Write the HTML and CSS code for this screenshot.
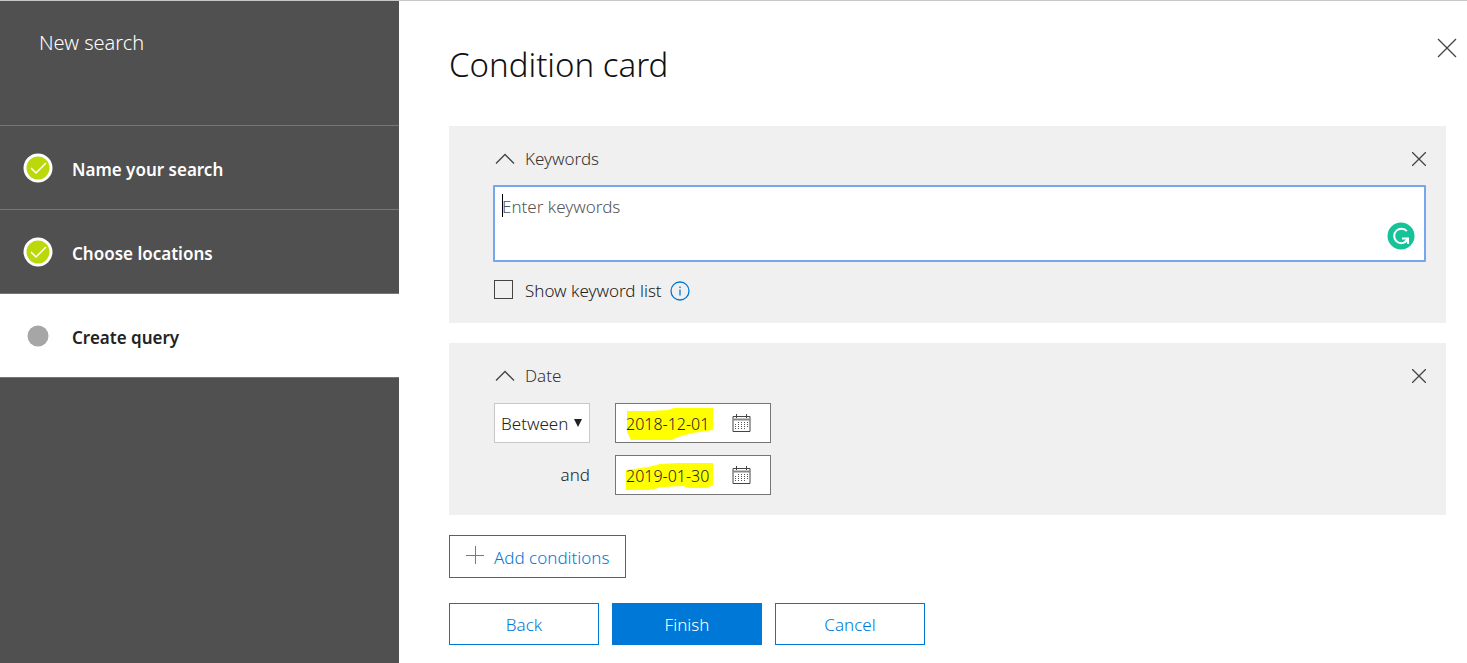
FILE: index.html
```html
<!DOCTYPE html>
<html lang="en">
<head>
  <meta charset="UTF-8" />
  <meta name="viewport" content="width=device-width, initial-scale=1.0"/>
  <title>New search</title>
  <link rel="stylesheet" href="styles.css">
</head>
<body>
  <aside class="sidebar">
    <h2 class="sidebar-title">New search</h2>
    <ol class="steps">
      <li class="step">
        <svg class="step-icon" viewBox="0 0 30 30">
          <circle cx="15" cy="15" r="13" fill="#bad80a" stroke="#fff" stroke-width="3"/>
          <path d="M8 15l5 5 10-10" fill="none" stroke="#fff" stroke-width="1.5"/>
        </svg>
        <span>Name your search</span>
      </li>
      <li class="step">
        <svg class="step-icon" viewBox="0 0 30 30">
          <circle cx="15" cy="15" r="13" fill="#bad80a" stroke="#fff" stroke-width="3"/>
          <path d="M8 15l5 5 10-10" fill="none" stroke="#fff" stroke-width="1.5"/>
        </svg>
        <span>Choose locations</span>
      </li>
      <li class="step active" aria-current="step">
        <svg class="step-icon" viewBox="0 0 30 30">
          <circle cx="15" cy="15" r="10.5" fill="#a6a6a6"/>
        </svg>
        <span>Create query</span>
      </li>
    </ol>
  </aside>

  <main class="main">
    <header class="page-header">
      <h1>Condition card</h1>
      <button class="icon-btn close" type="button" aria-label="Close">
        <svg width="20" height="20" viewBox="0 0 20 20"><path d="M1 1l18 18M19 1L1 19"/></svg>
      </button>
    </header>

    <form class="conditions">
      <section class="card">
        <div class="card-header">
          <button class="icon-btn" type="button" aria-label="Collapse keywords">
            <svg width="20" height="12" viewBox="0 0 20 12"><path d="M1 10.5l9-9 9 9"/></svg>
          </button>
          <label class="card-title" for="keywords">Keywords</label>
          <button class="icon-btn remove" type="button" aria-label="Remove keywords">
            <svg width="14" height="14" viewBox="0 0 14 14"><path d="M0 0l14 14M14 0L0 14"/></svg>
          </button>
        </div>
        <div class="keywords-box">
          <textarea id="keywords" placeholder="Enter keywords"></textarea>
          <svg class="assistant" width="28" height="28" viewBox="0 0 28 28">
            <circle cx="14" cy="14" r="13.5" fill="#15c39a"/>
            <path d="M19.8 9.2A7.2 7.2 0 1 0 19.5 19" fill="none" stroke="#fff" stroke-width="2"/>
            <path d="M15 16.5h6v5.5" fill="none" stroke="#fff" stroke-width="2"/>
            <path d="M21 16.5l-3.5 4" fill="none" stroke="#fff" stroke-width="2"/>
          </svg>
        </div>
        <div class="check-row">
          <input type="checkbox" id="show-list">
          <label for="show-list">Show keyword list</label>
          <svg class="info" width="20" height="20" viewBox="0 0 20 20">
            <circle cx="10" cy="10" r="9" fill="none" stroke="#0078d7" stroke-width="1.3"/>
            <path d="M10 8.5v6M10 5.5v1.5" stroke="#0078d7" stroke-width="1.3"/>
          </svg>
        </div>
      </section>

      <section class="card">
        <div class="card-header">
          <button class="icon-btn" type="button" aria-label="Collapse date">
            <svg width="20" height="12" viewBox="0 0 20 12"><path d="M1 10.5l9-9 9 9"/></svg>
          </button>
          <span class="card-title">Date</span>
          <button class="icon-btn remove" type="button" aria-label="Remove date">
            <svg width="14" height="14" viewBox="0 0 14 14"><path d="M0 0l14 14M14 0L0 14"/></svg>
          </button>
        </div>
        <div class="date-grid">
          <div class="operator">
            <select aria-label="Date operator">
              <option>Between</option>
            </select>
            <svg class="arrow" width="8" height="8" viewBox="0 0 8 8"><path d="M0 0h8L4 8z" fill="#222"/></svg>
          </div>
          <div class="date-field">
            <svg class="marker" width="90" height="36" viewBox="0 0 90 36">
              <path d="M1 7h23l18-1 6-2h39v22l-20 3-12 3-10 4H5l-4-8z" fill="#ff0"/>
            </svg>
            <input type="text" id="date-from" aria-label="Start date" value="2018-12-01">
            <svg class="calendar" width="19" height="18" viewBox="0 0 19 18">
              <path d="M1 2.5h17v15H1z" fill="#fff" stroke="#444"/>
              <path d="M1 5.5h17" stroke="#888" stroke-width="2"/>
              <path d="M4.500 0v4M14.500 0v4" stroke="#444"/>
              <path d="M6 8.500h10M3 10.500h13M3 12.500h13M3 14.500h10" stroke="#555" stroke-dasharray="1 2"/>
            </svg>
          </div>
          <label class="and" for="date-to">and</label>
          <div class="date-field">
            <svg class="marker" width="90" height="36" viewBox="0 0 90 36">
              <path d="M0 14l22-3 12-3 18-1h35v22l-6 3H62l-5-2-20 1-14 3H0z" fill="#ff0"/>
            </svg>
            <input type="text" id="date-to" value="2019-01-30">
            <svg class="calendar" width="19" height="18" viewBox="0 0 19 18">
              <path d="M1 2.5h17v15H1z" fill="#fff" stroke="#444"/>
              <path d="M1 5.5h17" stroke="#888" stroke-width="2"/>
              <path d="M4.500 0v4M14.500 0v4" stroke="#444"/>
              <path d="M6 8.500h10M3 10.500h13M3 12.500h13M3 14.500h10" stroke="#555" stroke-dasharray="1 2"/>
            </svg>
          </div>
        </div>
      </section>

      <button class="btn add" type="button">
        <svg width="18" height="18" viewBox="0 0 18 18"><path d="M0 9.500h18M9.500 0v18"/></svg>
        <span>Add conditions</span>
      </button>

      <div class="actions">
        <button class="btn" type="button">Back</button>
        <button class="btn primary" type="button">Finish</button>
        <button class="btn" type="button">Cancel</button>
      </div>
    </form>
  </main>
</body>
</html>
```
FILE: styles.css
```css
* {
  box-sizing: border-box;
}
body {
  display: flex;
  min-height: 100vh;
  margin: 0;
  border-top: 1px solid #c8c8c8;
  font-family: 'Segoe UI', 'Noto Sans', sans-serif;
  font-size: 17px;
  font-weight: 300;
  line-height: 24px;
  color: #222;
  background: #fff;
}
button, input, select, textarea {
  font: inherit;
  color: inherit;
}
h1, h2 {
  margin: 0;
  font-weight: 300;
}

/* Sidebar */
.sidebar {
  flex: 0 0 399px;
  background: #505050;
  color: #fff;
}
.sidebar-title {
  height: 125px;
  padding: 28px 39px;
  font-size: 20px;
  line-height: 28px;
  border-bottom: 1px solid #767676;
}
.steps {
  list-style: none;
  margin: 0;
  padding: 0;
}
.step {
  display: flex;
  align-items: center;
  gap: 19px;
  height: 84px;
  padding: 4px 23px 0;
  font-weight: 600;
  border-bottom: 1px solid #767676;
}
.step-icon {
  width: 30px;
  height: 30px;
  margin-bottom: 4px;
}
.step.active {
  background: #fff;
  color: #222;
}

/* Main */
.main {
  flex: 1;
  min-width: 0;
  padding: 0 21px 18px 50px;
}
.page-header {
  display: flex;
  justify-content: space-between;
  height: 125px;
  padding-top: 37px;
}
h1 {
  font-size: 33px;
  line-height: 54px;
  color: #111;
}
.icon-btn {
  display: flex;
  padding: 0;
  border: 0;
  background: none;
  cursor: pointer;
}
.icon-btn path {
  fill: none;
  stroke: #444;
  stroke-width: 1.3;
}
.close {
  align-self: flex-start;
  margin-right: -11px;
}
.card {
  padding: 15px 20px 20px 44px;
  margin-bottom: 20px;
  background: #f0f0f0;
}
.card-header {
  display: flex;
  align-items: center;
  gap: 10px;
  height: 36px;
  margin-bottom: 8px;
  padding-left: 2px;
}
.card-title {
  color: #333;
}
.remove {
  margin-left: auto;
}
.keywords-box {
  position: relative;
}
/* text cursor at the start of the box */
.keywords-box::before {
  content: "";
  position: absolute;
  top: 9px;
  left: 9px;
  width: 1px;
  height: 23px;
  background: #000;
}
textarea {
  display: block;
  width: 100%;
  height: 77px;
  padding: 8px 7px;
  border: 2px solid #76a7ee;
  border-radius: 1px;
  outline: none;
  background: #fff;
  resize: none;
}
textarea::placeholder {
  color: #555;
  opacity: 1;
}
.assistant {
  position: absolute;
  right: 11px;
  bottom: 12px;
}
.check-row {
  display: flex;
  align-items: center;
  gap: 8px;
  height: 24px;
  margin-top: 17px;
}
.check-row input {
  appearance: none;
  width: 19px;
  height: 19px;
  margin: 0 4px 4px 1px;
  border: 1px solid #444;
}

/* Date condition */
.date-grid {
  display: grid;
  grid-template-columns: 96px 156px;
  gap: 12px 25px;
  padding: 1px 0 0 1px;
}
.operator, .date-field {
  position: relative;
  height: 40px;
}
select {
  appearance: none;
  width: 100%;
  height: 100%;
  padding: 2px 6px 0;
  border: 1px solid #c8c8c8;
  border-radius: 0;
  background: #fff;
}
.arrow {
  position: absolute;
  top: 16px;
  right: 8px;
}
.date-field {
  display: flex;
  align-items: center;
  padding-right: 19px;
  border: 1px solid #767676;
  background: #fff;
}
.date-field input {
  position: relative;
  flex: 1;
  min-width: 0;
  height: 100%;
  padding: 2px 0 0 10px;
  border: 0;
  outline: none;
  background: none;
  font-size: 16px;
}
.marker {
  position: absolute;
  top: 0;
  left: 10px;
}
.and {
  align-self: center;
  text-align: right;
}

/* Buttons */
.btn {
  min-width: 150px;
  height: 42px;
  padding: 2px 16px 0;
  border: 1px solid #0078d7;
  background: #fff;
  color: #0078d7;
  cursor: pointer;
}
.btn.primary {
  background: #0078d7;
  color: #fff;
}
.add {
  display: flex;
  align-items: center;
  gap: 10px;
  height: 43px;
}
.add svg {
  margin-bottom: 6px;
}
.add path {
  stroke: #4a7fd8;
}
.actions {
  display: flex;
  gap: 13px;
  margin-top: 25px;
}
```
